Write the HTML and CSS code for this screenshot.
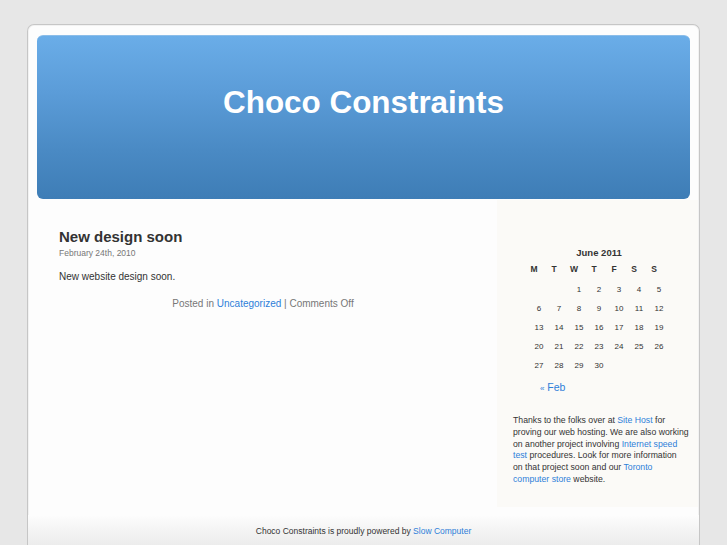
FILE: index.html
```html
<!DOCTYPE html>
<html>
<head>
<meta charset="utf-8">
<title>Choco Constraints</title>
<link rel="stylesheet" href="styles.css">
</head>
<body>
<div class="page">
  <div class="header">
    <h1 class="site-title">Choco Constraints</h1>
  </div>
  <div class="main">
    <div class="content">
      <div class="post">
        <h2 class="post-title">New design soon</h2>
        <div class="post-date">February 24th, 2010</div>
        <p class="post-body">New website design soon.</p>
        <p class="post-meta">Posted in <a href="#">Uncategorized</a> | Comments Off</p>
      </div>
    </div>
    <div class="sidebar">
      <div class="calendar">
        <div class="cal-caption">June 2011</div>
        <div class="cal-grid cal-head">
          <span>M</span><span>T</span><span>W</span><span>T</span><span>F</span><span>S</span><span>S</span>
        </div>
        <div class="cal-grid cal-days">
          <span></span><span></span><span>1</span><span>2</span><span>3</span><span>4</span><span>5</span>
          <span>6</span><span>7</span><span>8</span><span>9</span><span>10</span><span>11</span><span>12</span>
          <span>13</span><span>14</span><span>15</span><span>16</span><span>17</span><span>18</span><span>19</span>
          <span>20</span><span>21</span><span>22</span><span>23</span><span>24</span><span>25</span><span>26</span>
          <span>27</span><span>28</span><span>29</span><span>30</span><span></span><span></span><span></span>
        </div>
        <div class="cal-prev"><a href="#"><span class="laquo">&laquo;</span> Feb</a></div>
      </div>
      <p class="side-text">Thanks to the folks over at <a href="#">Site Host</a> for<br>proving our web hosting. We are also working<br>on another project involving <a href="#">Internet speed<br>test</a> procedures. Look for more information<br>on that project soon and our <a href="#">Toronto<br>computer store</a> website.</p>
    </div>
  </div>
  <div class="footer">
    <p>Choco Constraints is proudly powered by <a href="#">Slow Computer</a></p>
  </div>
</div>
</body>
</html>
```

FILE: styles.css
```css
html, body {
  margin: 0;
  padding: 0;
}
body {
  background: #e7e7e7;
  font-family: "Liberation Sans", Arial, sans-serif;
  color: #333;
  padding-top: 24px;
}
a {
  color: #2e7fd9;
  text-decoration: none;
}
.page {
  width: 671px;
  margin: 0 auto;
  background: #fdfdfd;
  border: 1px solid #c6c6c6;
  border-bottom: none;
  border-radius: 7px 7px 0 0;
  box-shadow: inset 0 0 0 1px #f2f2f2;
  padding-top: 10px;
}
.header {
  margin: 0 9px 0 9px;
  height: 164px;
  border-radius: 6px;
  background: linear-gradient(to bottom, #6aade8 0%, #5b9cd8 35%, #4a8ac4 70%, #3e7db6 100%);
  border-top: 1px solid #8bbde9;
  box-sizing: border-box;
  display: flex;
  align-items: flex-start;
  justify-content: center;
}
.site-title {
  margin: 49px 0 0 0;
  font-size: 31.4px;
  font-weight: bold;
  color: #fff;
  line-height: 36px;
}
.main {
  display: flex;
  margin-top: 1px;
}
.content {
  width: 469px;
  flex: none;
}
.post {
  padding: 27px 0 0 31px;
  width: 408px;
}
.post-title {
  margin: 0;
  font-size: 15px;
  line-height: 20px;
  font-weight: bold;
  color: #333;
}
.post-date {
  font-size: 8.5px;
  color: #777;
  line-height: 12px;
  margin-top: 0;
}
.post-body {
  margin: 11px 0 0 0;
  font-size: 10px;
  line-height: 14px;
}
.post-meta {
  margin: 13px 0 0 0;
  font-size: 10px;
  line-height: 14px;
  color: #777;
  text-align: center;
}
.sidebar {
  width: 201px;
  flex: none;
  background: #fbfaf7;
  padding: 46px 0 21px 16px;
  box-sizing: border-box;
}
.calendar {
  width: 140px;
  margin-left: 16px;
}
.cal-caption {
  text-align: center;
  font-size: 9.5px;
  font-weight: bold;
  line-height: 14px;
}
.cal-grid {
  display: grid;
  grid-template-columns: repeat(7, 20px);
  text-align: center;
}
.cal-head {
  font-size: 8.5px;
  font-weight: bold;
  line-height: 12px;
  margin-top: 3px;
}
.cal-head span {
  transform: translateX(-5px);
}
.cal-days {
  font-size: 8px;
  line-height: 19px;
  margin-top: 5px;
}
.cal-prev {
  font-size: 10.5px;
  line-height: 14px;
  margin-top: 5px;
  padding-left: 11px;
}
.laquo {
  font-size: 8px;
}
.side-text {
  margin: 19px 0 0 0;
  font-size: 8.7px;
  line-height: 11.8px;
  white-space: nowrap;
}
.footer {
  margin-top: 8px;
  height: 30px;
  background: linear-gradient(to bottom, #fdfdfd 0%, #f4f4f4 50%, #ececec 100%);
}
.footer p {
  margin: 0;
  padding-top: 10px;
  font-size: 8.5px;
  line-height: 12px;
  text-align: center;
}
```
